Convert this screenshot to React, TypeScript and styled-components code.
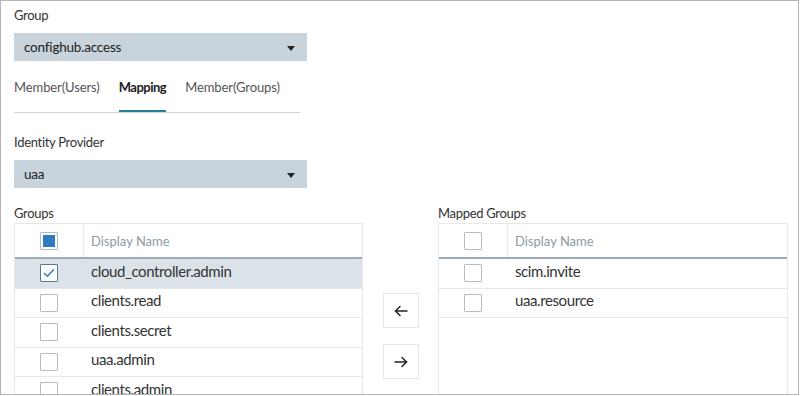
import React from "react";
import styled, { createGlobalStyle } from "styled-components";

const Global = createGlobalStyle`
  html, body { margin: 0; padding: 0; background: #fff; }
  body { font-family: Lato, "Noto Sans", sans-serif; color: #333; }
  * { box-sizing: border-box; }
`;

const Frame = styled.div`
  width: 799px;
  height: 395px;
  border: 1px solid #b4b4b4;
  overflow: hidden;
  padding: 6px 10px 0 13px;
  display: flex;
  flex-direction: column;
`;

const Label = styled.div<{ $mt?: number }>`
  font-size: 13px;
  line-height: 16px;
  letter-spacing: -0.3px;
  color: #333;
  margin-top: ${(p) => p.$mt ?? 0}px;
`;

const Select = styled.div<{ $mt?: number }>`
  width: 293px;
  height: 28px;
  margin-top: ${(p) => p.$mt ?? 10}px;
  background: #c8d3db;
  display: flex;
  align-items: center;
  justify-content: space-between;
  padding: 0 12px 0 10px;
  font-size: 13.5px;
  letter-spacing: -0.2px;
  color: #222;
`;

const Caret = styled.span`
  width: 0;
  height: 0;
  border-left: 4px solid transparent;
  border-right: 4px solid transparent;
  border-top: 5px solid #222;
  margin-top: 2px;
`;

const TabBar = styled.div`
  width: 286px;
  margin-top: 18px;
  display: flex;
  gap: 19px;
  border-bottom: 1px solid #d3d6d8;
`;

const Tab = styled.div<{ $active?: boolean }>`
  font-size: 13px;
  line-height: 16px;
  padding-bottom: 15px;
  letter-spacing: ${(p) => (p.$active ? "-0.5px" : "-0.1px")};
  color: ${(p) => (p.$active ? "#222" : "#555")};
  font-weight: ${(p) => (p.$active ? 700 : 400)};
  border-bottom: 2px solid ${(p) => (p.$active ? "#2a7d99" : "transparent")};
`;

const Lists = styled.div`
  margin-top: 17px;
  display: flex;
  align-items: flex-start;
  flex: 1;
  min-height: 0;
`;

const ListColumn = styled.div<{ $w: number }>`
  width: ${(p) => p.$w}px;
  display: flex;
  flex-direction: column;
  align-self: stretch;
`;

const Table = styled.div`
  margin-top: 2px;
  border: 1px solid #e6e8ea;
  border-bottom: none;
  flex: 1;
  display: flex;
  flex-direction: column;
`;

const HeaderRow = styled.div`
  height: 35px;
  display: flex;
  border-bottom: 2px solid #9eabb4;
  flex-shrink: 0;
`;

const Row = styled.div<{ $selected?: boolean }>`
  height: 29.5px;
  flex-shrink: 0;
  display: flex;
  border-bottom: 1px solid #e3e7ea;
  background: ${(p) => (p.$selected ? "#dce3e8" : "#fff")};
`;

const CheckCell = styled.div<{ $divider?: boolean }>`
  width: 69px;
  flex-shrink: 0;
  display: flex;
  align-items: center;
  justify-content: center;
  border-right: 1px solid ${(p) => (p.$divider ? "#e6e8ea" : "transparent")};
`;

const NameCell = styled.div<{ $header?: boolean }>`
  flex: 1;
  display: flex;
  align-items: center;
  padding-left: 7px;
  padding-bottom: ${(p) => (p.$header ? "0" : "5px")};
  font-size: ${(p) => (p.$header ? "13px" : "15px")};
  letter-spacing: ${(p) => (p.$header ? "0" : "-0.4px")};
  color: ${(p) => (p.$header ? "#8d9aa3" : "#333")};
`;

const Box = styled.span<{ $checked?: boolean }>`
  width: 18px;
  height: 18px;
  border: 1px solid ${(p) => (p.$checked ? "#56798b" : "#b5bec5")};
  border-radius: 1px;
  background: #fff;
  display: flex;
  align-items: center;
  justify-content: center;
  padding: 2px;
`;

const Fill = styled.span`
  width: 100%;
  height: 100%;
  background: #2f7bbf;
`;

const Buttons = styled.div`
  width: 75px;
  padding: 88px 19px 0 20px;
  display: flex;
  flex-direction: column;
  gap: 16px;
`;

const ArrowButton = styled.button`
  width: 36px;
  height: 35px;
  border: 1px solid #e2e4e6;
  background: #fff;
  padding: 0;
  display: flex;
  align-items: center;
  justify-content: center;
  cursor: pointer;
`;

const Arrow = ({ dir }: { dir: "left" | "right" }) => (
  <svg width="14" height="12" viewBox="0 0 14 12" fill="none" stroke="#222" strokeWidth="1.5" strokeLinecap="round" strokeLinejoin="round">
    {dir === "left" ? (
      <>
        <path d="M13 6H1.5" />
        <path d="M6 1.5L1.5 6L6 10.5" />
      </>
    ) : (
      <>
        <path d="M1 6h11.5" />
        <path d="M8 1.5L12.5 6L8 10.5" />
      </>
    )}
  </svg>
);

const Check = () => (
  <svg width="12" height="10" viewBox="0 0 12 10" fill="none" stroke="#2f7bbf" strokeWidth="1.5" strokeLinecap="round" strokeLinejoin="round">
    <path d="M1.5 5.5L4.5 8.2L10.5 1.8" />
  </svg>
);

const groups = [
  { name: "cloud_controller.admin", checked: true },
  { name: "clients.read" },
  { name: "clients.secret" },
  { name: "uaa.admin" },
  { name: "clients.admin" },
];

const mapped = ["scim.invite", "uaa.resource"];

export default function App() {
  return (
    <>
      <Global />
      <Frame>
        <Label>Group</Label>
        <Select>
          <span>confighub.access</span>
          <Caret />
        </Select>
        <TabBar>
          <Tab>Member(Users)</Tab>
          <Tab $active>Mapping</Tab>
          <Tab>Member(Groups)</Tab>
        </TabBar>
        <Label $mt={21}>Identity Provider</Label>
        <Select>
          <span>uaa</span>
          <Caret />
        </Select>
        <Lists>
          <ListColumn $w={349}>
            <Label>Groups</Label>
            <Table>
              <HeaderRow>
                <CheckCell $divider>
                  <Box>
                    <Fill />
                  </Box>
                </CheckCell>
                <NameCell $header>Display Name</NameCell>
              </HeaderRow>
              {groups.map((g) => (
                <Row key={g.name} $selected={g.checked}>
                  <CheckCell>
                    <Box $checked={g.checked}>{g.checked && <Check />}</Box>
                  </CheckCell>
                  <NameCell>{g.name}</NameCell>
                </Row>
              ))}
            </Table>
          </ListColumn>
          <Buttons>
            <ArrowButton aria-label="Remove">
              <Arrow dir="left" />
            </ArrowButton>
            <ArrowButton aria-label="Add">
              <Arrow dir="right" />
            </ArrowButton>
          </Buttons>
          <ListColumn $w={350}>
            <Label>Mapped Groups</Label>
            <Table>
              <HeaderRow>
                <CheckCell $divider>
                  <Box />
                </CheckCell>
                <NameCell $header>Display Name</NameCell>
              </HeaderRow>
              {mapped.map((m) => (
                <Row key={m}>
                  <CheckCell>
                    <Box />
                  </CheckCell>
                  <NameCell>{m}</NameCell>
                </Row>
              ))}
            </Table>
          </ListColumn>
        </Lists>
      </Frame>
    </>
  );
}
